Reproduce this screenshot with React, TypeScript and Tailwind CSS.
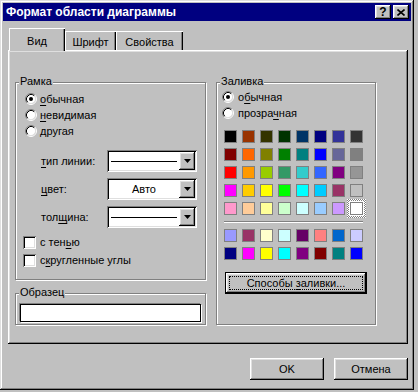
import React from "react";

const raised =
  "bg-[#c0c0c0] shadow-[inset_-1px_-1px_#000,inset_1px_1px_#fff,inset_-2px_-2px_#808080,inset_2px_2px_#dfdfdf]";
const sunken =
  "shadow-[inset_1px_1px_#808080,inset_-1px_-1px_#fff,inset_2px_2px_#000,inset_-2px_-2px_#dfdfdf]";

const palette = [
  ["bg-[#000000]", "bg-[#993300]", "bg-[#333300]", "bg-[#003300]", "bg-[#003366]", "bg-[#000080]", "bg-[#333399]", "bg-[#333333]"],
  ["bg-[#800000]", "bg-[#ff6600]", "bg-[#808000]", "bg-[#008000]", "bg-[#008080]", "bg-[#0000ff]", "bg-[#666699]", "bg-[#808080]"],
  ["bg-[#ff0000]", "bg-[#ff9900]", "bg-[#99cc00]", "bg-[#339966]", "bg-[#33cccc]", "bg-[#3366ff]", "bg-[#800080]", "bg-[#969696]"],
  ["bg-[#ff00ff]", "bg-[#ffcc00]", "bg-[#ffff00]", "bg-[#00ff00]", "bg-[#00ffff]", "bg-[#00ccff]", "bg-[#993366]", "bg-[#c0c0c0]"],
  ["bg-[#ff99cc]", "bg-[#ffcc99]", "bg-[#ffff99]", "bg-[#ccffcc]", "bg-[#ccffff]", "bg-[#99ccff]", "bg-[#cc99ff]", "bg-[#ffffff]"],
];

const chartColors = [
  ["bg-[#9999ff]", "bg-[#993366]", "bg-[#ffffcc]", "bg-[#ccffff]", "bg-[#660066]", "bg-[#ff8080]", "bg-[#0066cc]", "bg-[#ccccff]"],
  ["bg-[#000080]", "bg-[#ff00ff]", "bg-[#ffff00]", "bg-[#00ffff]", "bg-[#800080]", "bg-[#800000]", "bg-[#008080]", "bg-[#0000ff]"],
];

function Radio({ on }: { on?: boolean }) {
  return (
    <svg width="12" height="12" viewBox="0 0 12 12" className="shrink-0">
      <circle cx="6" cy="6" r="4.5" fill="#fff" />
      <path d="M2.11 9.89A5.5 5.5 0 0 1 9.89 2.11" fill="none" stroke="#808080" />
      <path d="M9.89 2.11A5.5 5.5 0 0 1 2.11 9.89" fill="none" stroke="#fff" />
      <path d="M2.82 9.18A4.5 4.5 0 0 1 9.18 2.82" fill="none" stroke="#000" />
      <path d="M9.18 2.82A4.5 4.5 0 0 1 2.82 9.18" fill="none" stroke="#dfdfdf" />
      {on && <circle cx="6" cy="6" r="2" fill="#000" />}
    </svg>
  );
}

function Check() {
  return <span className={`size-[13px] shrink-0 bg-white ${sunken}`} />;
}

function U({ children }: { children: React.ReactNode }) {
  return <span className="underline underline-offset-[2px]">{children}</span>;
}

function Combo({ children }: { children: React.ReactNode }) {
  return (
    <div className={`flex h-[22px] w-[90px] bg-white p-[2px] ${sunken}`}>
      <div className="flex flex-1 items-center justify-center">{children}</div>
      <div className={`flex w-[16px] items-center justify-center ${raised}`}>
        <svg width="7" height="4" viewBox="0 0 7 4">
          <path d="M0 0h7L3.5 4z" fill="#000" />
        </svg>
      </div>
    </div>
  );
}

function GroupBox({
  title,
  className,
  children,
}: {
  title: string;
  className: string;
  children?: React.ReactNode;
}) {
  return (
    <div
      className={`relative border border-[#808080] shadow-[1px_1px_0_#fff,inset_1px_1px_0_#fff] ${className}`}
    >
      <span className="absolute left-[3px] top-[-8px] bg-[#c0c0c0] px-[1px] leading-[13px]">
        {title}
      </span>
      {children}
    </div>
  );
}

function Swatch({ color, selected }: { color: string; selected?: boolean }) {
  if (selected) {
    return (
      <div className="relative size-[13px]">
        <span className="absolute -inset-[3px] bg-[repeating-conic-gradient(#808080_0_25%,#fff_0_50%)] bg-size-[2px_2px]" />
        <span className="absolute -inset-[1px] bg-white" />
        <span className={`relative block size-[13px] border border-[#808080] ${color}`} />
      </div>
    );
  }
  return <div className={`size-[13px] border border-[#808080] ${color}`} />;
}

export default function App() {
  return (
    <div className="min-h-screen bg-[#c0c0c0] font-['Liberation_Sans',Arial,sans-serif] text-[11px] text-black">
      <div className="flex h-[390px] w-[414px] flex-col bg-[#c0c0c0] p-[3px] shadow-[inset_-1px_-1px_#000,inset_1px_1px_#dfdfdf,inset_-2px_-2px_#808080,inset_2px_2px_#fff]">
        {/* title bar */}
        <div className="flex h-[18px] items-center bg-[#000080] pl-[3px] pr-[2px]">
          <span className="text-[12px] font-bold leading-none text-white">Формат области диаграммы</span>
          <div className="ml-auto flex gap-[2px]">
            <div className={`flex h-[14px] w-[16px] items-center justify-center ${raised}`}>
              <span className="text-[12px] font-bold leading-none">?</span>
            </div>
            <div className={`flex h-[14px] w-[16px] items-center justify-center ${raised}`}>
              <svg width="8" height="7" viewBox="0 0 8 7">
                <path d="M0.5 0.5L7.5 6.5M7.5 0.5L0.5 6.5" stroke="#000" strokeWidth="1.6" />
              </svg>
            </div>
          </div>
        </div>

        {/* tabs */}
        <div className="relative z-10 ml-[6px] mt-[7px] flex h-[22px] items-end">
          <div className="mb-[-1px] flex h-[23px] w-[56px] justify-center bg-[#c0c0c0] pt-[5px] shadow-[inset_1px_1px_#fff,inset_-1px_0_#000,inset_-2px_0_#808080]">
            Вид
          </div>
          <div className="flex h-[19px] w-[51px] justify-center pt-[3px] shadow-[inset_1px_1px_#fff,inset_-1px_0_#000,inset_-2px_0_#808080]">
            Шрифт
          </div>
          <div className="flex h-[19px] w-[67px] justify-center pt-[3px] shadow-[inset_1px_1px_#fff,inset_-1px_0_#000,inset_-2px_0_#808080]">
            Свойства
          </div>
        </div>

        {/* panel */}
        <div className={`ml-[5px] flex h-[294px] w-[400px] gap-[10px] pl-[7px] pt-[32px] ${raised}`}>
          <div className="flex w-[191px] flex-col gap-[13px]">
            <GroupBox title="Рамка" className="h-[198px] pl-[9px] pt-[8px]">
              <div className="flex h-[16px] items-center gap-[3px]">
                <Radio on />
                <span>
                  <U>о</U>бычная
                </span>
              </div>
              <div className="flex h-[16px] items-center gap-[3px]">
                <Radio />
                <span>
                  <U>н</U>евидимая
                </span>
              </div>
              <div className="flex h-[16px] items-center gap-[3px]">
                <Radio />
                <span>другая</span>
              </div>

              <div className="mt-[11px] flex flex-col gap-[6px] pl-[16px]">
                <div className="flex h-[22px] items-center">
                  <span className="w-[66px]">
                    <U>т</U>ип линии:
                  </span>
                  <Combo>
                    <div className="h-px w-[66px] bg-black" />
                  </Combo>
                </div>
                <div className="flex h-[22px] items-center">
                  <span className="w-[66px]">
                    <U>ц</U>вет:
                  </span>
                  <Combo>
                    <span>Авто</span>
                  </Combo>
                </div>
                <div className="flex h-[22px] items-center">
                  <span className="w-[66px]">
                    тол<U>щ</U>ина:
                  </span>
                  <Combo>
                    <div className="h-px w-[66px] bg-black" />
                  </Combo>
                </div>
              </div>

              <div className="ml-[-2px] mt-[6px] flex flex-col gap-[2px]">
                <div className="flex h-[16px] items-center gap-[4px]">
                  <Check />
                  <span>
                    с тен<U>ь</U>ю
                  </span>
                </div>
                <div className="flex h-[16px] items-center gap-[4px]">
                  <Check />
                  <span>
                    с<U>к</U>ругленные углы
                  </span>
                </div>
              </div>
            </GroupBox>

            <GroupBox title="Образец" className="h-[32px] pl-[4px] pt-[10px]">
              <div className="h-[18px] w-[181px] border border-black bg-white shadow-[-1px_-1px_0_#808080,1px_1px_0_#fff]" />
            </GroupBox>
          </div>

          <GroupBox title="Заливка" className="h-[243px] w-[160px] pl-[5px] pt-[6px]">
            <div className="flex h-[16px] items-center gap-[4px]">
              <Radio on />
              <span>
                о<U>б</U>ычная
              </span>
            </div>
            <div className="flex h-[16px] items-center gap-[4px]">
              <Radio />
              <span>
                прозра<U>ч</U>ная
              </span>
            </div>

            <div className="ml-[2px] mt-[9px] flex w-[139px] flex-col">
              <div className="flex flex-col gap-[5px]">
                {palette.map((row, r) => (
                  <div key={r} className="flex gap-[5px]">
                    {row.map((c, i) => (
                      <Swatch key={i} color={c} selected={r === 4 && i === 7} />
                    ))}
                  </div>
                ))}
              </div>
              <div className="mt-[6px] h-[2px] border-t border-[#808080] bg-white" />
              <div className="mt-[6px] flex flex-col gap-[5px]">
                {chartColors.map((row, r) => (
                  <div key={r} className="flex gap-[5px]">
                    {row.map((c, i) => (
                      <Swatch key={i} color={c} />
                    ))}
                  </div>
                ))}
              </div>
            </div>

            <div className="ml-[3px] mt-[12px] h-[22px] w-[142px] border border-black">
              <div className={`flex h-full w-full p-[3px] ${raised}`}>
                <div className="flex flex-1 items-center justify-center border border-dotted border-black">
                  <span>
                    Способы <U>з</U>аливки...
                  </span>
                </div>
              </div>
            </div>
          </GroupBox>
        </div>

        {/* buttons */}
        <div className="ml-[5px] mt-[14px] flex w-[400px] justify-end gap-[10px]">
          <div className={`flex h-[22px] w-[74px] items-center justify-center ${raised}`}>OK</div>
          <div className={`flex h-[22px] w-[74px] items-center justify-center ${raised}`}>Отмена</div>
        </div>
      </div>
    </div>
  );
}
